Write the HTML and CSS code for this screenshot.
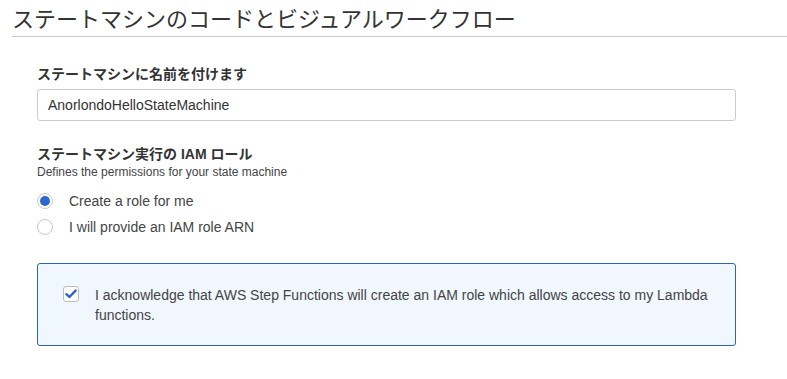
FILE: index.html
```html
<!DOCTYPE html>
<html lang="ja">
<head>
    <meta charset="UTF-8">
    <meta name="viewport" content="width=device-width, initial-scale=1.0">
    <title>ステートマシン</title>
    <link rel="stylesheet" href="styles.css">
</head>
<body>

    <div class="page">
        <h1>ステートマシンのコードとビジュアルワークフロー</h1>

        <div class="form">
            <!-- 名前 -->
            <label class="field-label" for="name">ステートマシンに名前を付けます</label>
            <input type="text" id="name" class="text-input" value="AnorlondoHelloStateMachine">

            <!-- IAM ロール -->
            <div class="field-label role-label">ステートマシン実行の IAM ロール</div>
            <div class="hint">Defines the permissions for your state machine</div>

            <div class="option">
                <input type="radio" id="create" name="role" checked>
                <label for="create">Create a role for me</label>
            </div>
            <div class="option">
                <input type="radio" id="provide" name="role">
                <label for="provide">I will provide an IAM role ARN</label>
            </div>

            <div class="notice">
                <span class="check">
                    <svg width="12" height="10" viewBox="0 0 12 10">
                        <path d="M1.5 5.2 L4.4 8 L10.6 1.6" fill="none" stroke="#2a62c9" stroke-width="2.4" stroke-linecap="round" stroke-linejoin="round"/>
                    </svg>
                </span>
                <p>I acknowledge that AWS Step Functions will create an IAM role which allows access to my Lambda functions.</p>
            </div>
        </div>
    </div>

</body>
</html>
```

FILE: styles.css
```css
body {
    font-family: "Liberation Sans", "Noto Sans CJK JP", Arial, sans-serif;
    color: #444;
    margin: 0;
    padding: 0;
    background: #fff;
}

.page {
    padding-left: 12px;
}

h1 {
    font-family: "Noto Sans CJK JP", sans-serif;
    font-size: 22px;
    font-weight: normal;
    line-height: 22px;
    color: #333;
    margin: 0;
    padding: 6px 0 8px;
    border-bottom: 1px solid #ccc;
}

.form {
    width: 699px;
    margin-left: 25px;
    padding-top: 26px;
}

.field-label {
    display: block;
    font-family: "Noto Sans CJK JP", sans-serif;
    font-size: 14px;
    font-weight: bold;
    line-height: 20px;
    color: #333;
}

.field-label .latin,
.role-label {
    font-family: "Liberation Sans", "Noto Sans CJK JP", sans-serif;
}

.text-input {
    display: block;
    box-sizing: border-box;
    width: 699px;
    height: 32px;
    margin: 6px 0 0;
    padding: 0 10px;
    border: 1px solid #ccc;
    border-radius: 3px;
    font-family: "Liberation Sans", sans-serif;
    font-size: 14px;
    color: #333;
}

.role-label {
    margin-top: 23px;
}

.hint {
    font-size: 12px;
    line-height: 16px;
    color: #444;
}

.option {
    display: flex;
    align-items: center;
    height: 20px;
    font-size: 14px;
    color: #444;
    margin-top: 6px;
}

.hint + .option {
    margin-top: 11px;
}

input[type="radio"] {
    appearance: none;
    -webkit-appearance: none;
    box-sizing: border-box;
    width: 16px;
    height: 16px;
    margin: 0 16px 0 0;
    border: 1px solid #c9c9c9;
    border-radius: 50%;
    background: #fff;
    display: grid;
    place-items: center;
}

input[type="radio"]:checked::after {
    content: "";
    width: 10px;
    height: 10px;
    border-radius: 50%;
    background: #2d68cf;
}

.notice {
    display: flex;
    align-items: flex-start;
    box-sizing: border-box;
    width: 699px;
    margin-top: 26px;
    padding: 21px 20px 20px 25px;
    border: 1px solid #2b64c0;
    border-radius: 3px;
    background-color: #f0f7fe;
}

.check {
    flex: none;
    box-sizing: border-box;
    width: 16px;
    height: 16px;
    margin: 1px 16px 0 0;
    border: 1px solid #bcbcbc;
    border-radius: 3px;
    background: #fff;
    display: grid;
    place-items: center;
}

.notice p {
    margin: 0;
    font-size: 14px;
    line-height: 20px;
    color: #444;
}
```
